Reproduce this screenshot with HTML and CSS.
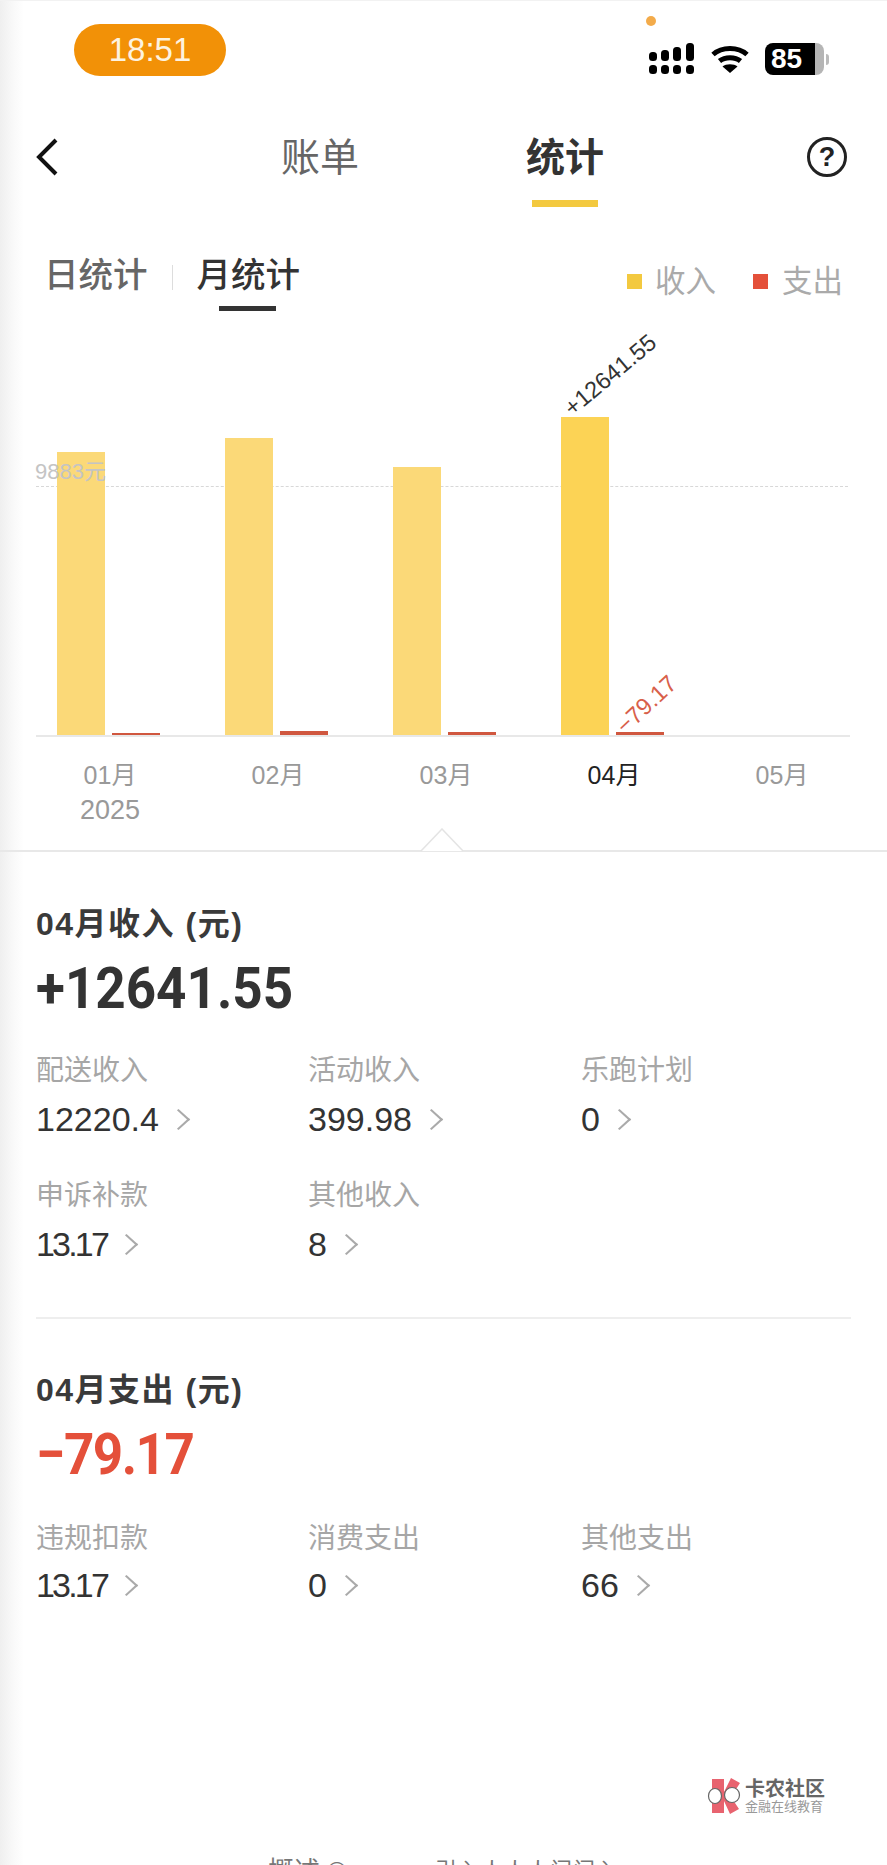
FILE: index.html
```html
<!DOCTYPE html>
<html lang="zh-CN">
<head>
    <meta charset="UTF-8">
    <meta name="viewport" content="width=device-width, initial-scale=1.0">
    <title>统计</title>
    <link rel="stylesheet" href="styles.css">
</head>
<body>
    <div class="page">
        <!-- Status bar -->
        <div class="statusBar">
            <div class="timePill">18:51</div>
            <div class="statusIcons">
                <span class="camDot"></span>
                <svg class="iconSignal" width="46" height="32" viewBox="0 0 46 32">
                    <rect x="0" y="9" width="8" height="9" rx="3.5"/><rect x="12" y="7" width="8" height="11" rx="3.5"/><rect x="24" y="4" width="8" height="14" rx="3.5"/><rect x="37" y="0" width="8" height="18" rx="3.5"/>
                    <rect x="0" y="22" width="8" height="9" rx="3.5"/><rect x="12" y="22" width="8" height="9" rx="3.5"/><rect x="24" y="22" width="8" height="9" rx="3.5"/><rect x="37" y="22" width="8" height="9" rx="3.5"/>
                </svg>
                <svg class="iconWifi" width="38" height="30" viewBox="0 0 38 30">
                    <path d="M2 10.5C11 2.5 27 2.5 36 10.5M8.5 17C14 12.5 24 12.5 29.500 17" fill="none" stroke="#000" stroke-width="5"/>
                    <path d="M19 29L11.500 22.500C15 19.500 23 19.500 26.500 22.500Z"/>
                </svg>
                <div class="battery"><span class="batteryFill">85</span><span class="batteryRest"></span><span class="batteryCap"></span></div>
            </div>
        </div>

        <!-- Top tabs -->
        <div class="navBar">
            <svg class="backIcon" width="24" height="38" viewBox="0 0 24 38"><path d="M21 2L4 19L21 36" fill="none" stroke="#111" stroke-width="4"/></svg>
            <div class="navTab">账单</div>
            <div class="navTab navTabActive">统计</div>
            <div class="helpIcon">?</div>
        </div>

        <!-- Day / month switch and legend -->
        <div class="subBar">
            <div class="subTab">日统计</div>
            <span class="subSep"></span>
            <div class="subTab subTabActive">月统计</div>
            <div class="legend">
                <span class="legendDot dotIncome"></span><span class="legendText">收入</span>
                <span class="legendDot dotExpense"></span><span class="legendText">支出</span>
            </div>
        </div>

        <!-- Chart -->
        <div class="chart">
            <div class="avgLine"></div>
            <div class="plot">
                <div class="group">
                    <div class="bar barIncome" style="height: 283px"></div>
                    <div class="bar barExpense" style="height: 2px"></div>
                </div>
                <div class="group">
                    <div class="bar barIncome" style="height: 297px"></div>
                    <div class="bar barExpense" style="height: 4px"></div>
                </div>
                <div class="group">
                    <div class="bar barIncome" style="height: 268px"></div>
                    <div class="bar barExpense" style="height: 3px"></div>
                </div>
                <div class="group">
                    <div class="bar barIncome barCurrent" style="height: 318px">
                        <span class="barValue valueIncome">+12641.55</span>
                    </div>
                    <div class="bar barExpense" style="height: 3px">
                        <span class="barValue valueExpense">−79.17</span>
                    </div>
                </div>
                <div class="group"></div>
            </div>
            <div class="avgLabel">9883元</div>
            <div class="months">
                <div class="month">01月<span class="year">2025</span></div>
                <div class="month">02月</div>
                <div class="month">03月</div>
                <div class="month monthActive">04月</div>
                <div class="month">05月</div>
            </div>
            <svg class="pointer" width="44" height="24" viewBox="0 0 44 24"><path d="M1 23L22 1L43 23" fill="#fff" stroke="#e4e4e4" stroke-width="1.500"/></svg>
        </div>

        <!-- Income details -->
        <section class="summary summaryIncome">
            <h2 class="summaryTitle">04月收入 (元)</h2>
            <div class="summaryTotal">+12641.55</div>
            <div class="items">
                <div class="item"><div class="itemLabel">配送收入</div><div class="itemValue">12220.4<i class="chevron"></i></div></div>
                <div class="item"><div class="itemLabel">活动收入</div><div class="itemValue">399.98<i class="chevron"></i></div></div>
                <div class="item"><div class="itemLabel">乐跑计划</div><div class="itemValue">0<i class="chevron"></i></div></div>
                <div class="item"><div class="itemLabel">申诉补款</div><div class="itemValue valueTight">13.17<i class="chevron"></i></div></div>
                <div class="item"><div class="itemLabel">其他收入</div><div class="itemValue">8<i class="chevron"></i></div></div>
            </div>
        </section>

        <!-- Expense details -->
        <section class="summary summaryExpense">
            <h2 class="summaryTitle">04月支出 (元)</h2>
            <div class="summaryTotal totalExpense">−79.17</div>
            <div class="items">
                <div class="item"><div class="itemLabel">违规扣款</div><div class="itemValue valueTight">13.17<i class="chevron"></i></div></div>
                <div class="item"><div class="itemLabel">消费支出</div><div class="itemValue">0<i class="chevron"></i></div></div>
                <div class="item"><div class="itemLabel">其他支出</div><div class="itemValue">66<i class="chevron"></i></div></div>
            </div>
        </section>

        <!-- Watermark -->
        <div class="watermark">
            <svg width="36" height="38" viewBox="0 0 36 38">
                <path d="M5 2H17V36H5Z" fill="#e8636f"/>
                <path d="M17 15L24 1L33 6L24 20L32 32L23 37L17 24Z" fill="#e8636f"/>
                <ellipse cx="8" cy="19" rx="6.500" ry="7.500" fill="#fff" stroke="#666" stroke-width="1.200"/>
                <ellipse cx="25" cy="18" rx="7.500" ry="7.500" fill="#fff" stroke="#666" stroke-width="1.200"/>
            </svg>
            <div class="markText">
                <div class="markName">卡农社区</div>
                <div class="markSub">金融在线教育</div>
            </div>
        </div>

        <!-- Text cut off by the bottom edge -->
        <div class="cutOff">
            <span class="cutLeft">概述 ©</span>
            <span class="cutRight">引入人人人门门入</span>
        </div>
    </div>
</body>
</html>
```

FILE: styles.css
```css
* {
    box-sizing: border-box;
}

html, body {
    margin: 0;
    padding: 0;
    background-color: #fff;
}

body {
    font-family: "Liberation Sans", "Noto Sans CJK SC", sans-serif;
    color: #333;
}

.page {
    width: 887px;
    height: 1865px;
    overflow: hidden;
    position: relative;
    border-top: 1px solid #f2f2f2;
    background: linear-gradient(to right, #efefef 0, #f8f8f8 12px, #fff 24px);
}

/* Status bar */
.statusBar {
    height: 124px;
    padding: 23px 58px 0 74px;
    display: flex;
    justify-content: space-between;
    align-items: flex-start;
}

.timePill {
    width: 152px;
    height: 52px;
    border-radius: 26px;
    background-color: #f29107;
    color: #fdf3e0;
    font-size: 33px;
    line-height: 52px;
    text-align: center;
}

.statusIcons {
    display: flex;
    align-items: center;
    gap: 16px;
    margin-top: 19px;
    position: relative;
}

.camDot {
    position: absolute;
    left: -3px;
    top: -27px;
    width: 10px;
    height: 10px;
    border-radius: 50%;
    background-color: #f3ab4a;
}

.battery {
    display: flex;
    align-items: center;
    height: 32px;
}

.batteryFill {
    width: 50px;
    height: 32px;
    padding-left: 6px;
    background-color: #000;
    border-radius: 8px 0 0 8px;
    color: #fff;
    font-size: 28px;
    font-weight: bold;
    line-height: 32px;
}

.batteryRest {
    width: 9px;
    height: 32px;
    background-color: #b5b5b5;
    border-radius: 0 8px 8px 0;
}

.batteryCap {
    width: 3px;
    height: 11px;
    margin-left: 2px;
    background-color: #bbb;
    border-radius: 0 3px 3px 0;
}

/* Top tabs */
.navBar {
    height: 125px;
    display: flex;
    position: relative;
    padding-left: 281px;
    gap: 167px;
}

.backIcon {
    position: absolute;
    left: 35px;
    top: 13px;
}

.navTab {
    font-size: 39px;
    line-height: 66px;
    height: 82px;
    color: #666;
    position: relative;
}

.navTabActive {
    color: #333;
    font-weight: bold;
}

.navTabActive::after {
    content: "";
    position: absolute;
    left: 6px;
    right: 6px;
    bottom: 0;
    height: 7px;
    background-color: #f3c93f;
}

.helpIcon {
    position: absolute;
    left: 807px;
    top: 12px;
    width: 40px;
    height: 40px;
    border: 3px solid #222;
    border-radius: 50%;
    font-size: 27px;
    font-weight: bold;
    line-height: 34px;
    text-align: center;
    color: #222;
}

/* Day / month switch */
.subBar {
    height: 74px;
    display: flex;
    padding-left: 44px;
    position: relative;
}

.subTab {
    font-size: 34.500px;
    line-height: 50px;
    height: 61px;
    color: #666;
    font-weight: 500;
    position: relative;
}

.subTabActive {
    color: #333;
}

.subTabActive::after {
    content: "";
    position: absolute;
    left: 22px;
    width: 57px;
    bottom: 0;
    height: 5px;
    background-color: #333;
}

.subSep {
    width: 1px;
    height: 25px;
    margin: 15px 24px 0 24px;
    background-color: #ddd;
}

.legend {
    position: absolute;
    left: 627px;
    top: 11px;
    display: flex;
    align-items: center;
}

.legendDot {
    width: 15px;
    height: 15px;
}

.dotIncome {
    background-color: #f3c93f;
    margin-right: 13px;
}

.dotExpense {
    background-color: #e4503a;
    margin: 0 14px 0 37px;
}

.legendText {
    font-size: 30.500px;
    line-height: 40px;
    color: #aaa;
}

/* Chart */
.chart {
    height: 528px;
    position: relative;
    border-bottom: 2px solid #e8e8e8;
}

.avgLine {
    position: absolute;
    left: 36px;
    width: 812px;
    top: 162px;
    border-top: 1px dashed #d8d8d8;
}

.avgLabel {
    position: absolute;
    left: 35px;
    top: 135px;
    font-size: 22px;
    line-height: 26px;
    color: #c4c4c4;
}

.plot {
    position: absolute;
    left: 36px;
    width: 814px;
    top: 0;
    height: 413px;
    padding-left: 21px;
    display: flex;
    align-items: flex-end;
    border-bottom: 2px solid #e8e8e8;
}

.group {
    flex: none;
    width: 168px;
    height: 100%;
    display: flex;
    align-items: flex-end;
    gap: 7px;
}

.bar {
    width: 48px;
    position: relative;
}

.barIncome {
    background-color: #fbd978;
}

.barCurrent {
    background-color: #fcd355;
}

.barExpense {
    background-color: #d0573f;
}

.barValue {
    position: absolute;
    font-size: 23.500px;
    line-height: 24px;
    white-space: nowrap;
    transform-origin: left bottom;
    transform: rotate(-40deg);
}

.valueIncome {
    color: #333;
    left: 14px;
    bottom: calc(100% - 3px);
}

.valueExpense {
    color: #d8604a;
    left: 12px;
    bottom: calc(100% - 6px);
    transform: rotate(-43deg);
}

.months {
    position: absolute;
    top: 434px;
    left: 26px;
    display: flex;
}

.month {
    width: 168px;
    text-align: center;
    font-size: 25px;
    line-height: 35px;
    color: #999;
}

.monthActive {
    color: #222;
}

.year {
    display: block;
    font-size: 27px;
}

.pointer {
    position: absolute;
    left: 420px;
    bottom: -2px;
}

/* Summary blocks */
.summary {
    padding: 0 36px;
}

.summaryIncome {
    padding-top: 52px;
    height: 465px;
}

.summaryExpense {
    margin: 0 36px;
    padding: 51px 0 0;
    border-top: 2px solid #eee;
}

.summaryTitle {
    margin: 0;
    font-size: 32px;
    letter-spacing: 1.500px;
    line-height: 40px;
    font-weight: bold;
    color: #3a3a3a;
}

.summaryTotal {
    margin-top: 11px;
    font-family: Roboto, "Liberation Sans", sans-serif;
    font-size: 53px;
    line-height: 66px;
    font-weight: bold;
    color: #333;
    transform: scaleY(1.1);
    transform-origin: left center;
}

.totalExpense {
    color: #e4503a;
    letter-spacing: -1.500px;
}

.items {
    display: grid;
    grid-template-columns: 272px 273px 1fr;
    row-gap: 38px;
    margin-top: 32px;
}

.summaryExpense .items {
    margin-top: 34px;
}

.summaryExpense .itemValue {
    margin-top: 7px;
}

.itemLabel {
    font-size: 28px;
    line-height: 36px;
    color: #a6a6a6;
}

.itemValue {
    margin-top: 9px;
    font-size: 34px;
    line-height: 42px;
    color: #333;
    display: flex;
    align-items: center;
}

.valueTight {
    letter-spacing: -2.800px;
}

.chevron {
    width: 15px;
    height: 15px;
    margin-left: 12px;
    border-top: 2px solid #aaa;
    border-right: 2px solid #aaa;
    transform: scaleX(1.1) rotate(45deg);
}

/* Watermark */
.watermark {
    position: absolute;
    left: 707px;
    top: 1776px;
    display: flex;
    gap: 2px;
}

.markName {
    font-size: 20px;
    line-height: 24px;
    font-weight: bold;
    color: #666;
}

.markSub {
    font-size: 13px;
    line-height: 12px;
    color: #999;
}

/* Only the tops of these glyphs are in frame */
.cutOff {
    position: absolute;
    top: 1855px;
    left: 268px;
    display: flex;
    font-size: 26px;
    line-height: 30px;
    color: #777;
}

.cutLeft {
    width: 167px;
}

.cutRight {
    font-size: 22px;
    letter-spacing: 1px;
}
```
